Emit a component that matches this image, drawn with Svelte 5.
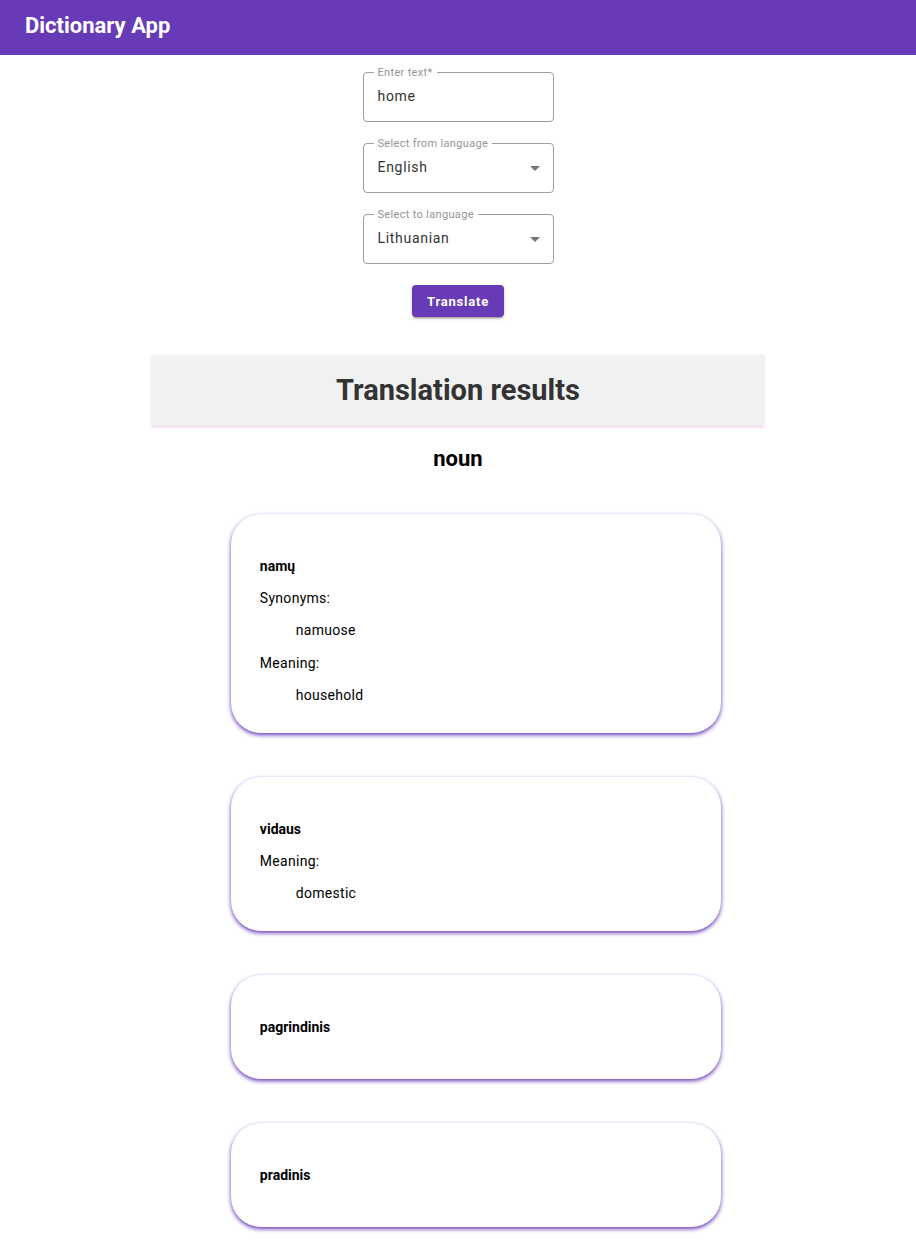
<script>
  const languages = ['English', 'Lithuanian', 'German', 'French', 'Spanish'];

  let text = $state('home');
  let from = $state('English');
  let to = $state('Lithuanian');

  const groups = [
    {
      type: 'noun',
      entries: [
        { word: 'namų', synonyms: ['namuose'], meanings: ['household'] },
        { word: 'vidaus', synonyms: [], meanings: ['domestic'] },
        { word: 'pagrindinis', synonyms: [], meanings: [] },
        { word: 'pradinis', synonyms: [], meanings: [] }
      ]
    }
  ];
</script>

{#snippet arrow()}
  <svg class="arrow" viewBox="0 0 10 5" aria-hidden="true"><path d="M0 0h10L5 5z" /></svg>
{/snippet}

<header class="toolbar">
  <h1>Dictionary App</h1>
</header>

<main>
  <form onsubmit={(e) => e.preventDefault()}>
    <div class="field">
      <label for="text">Enter text*</label>
      <input id="text" type="text" bind:value={text} />
    </div>
    <div class="field">
      <label for="from">Select from language</label>
      <select id="from" bind:value={from}>
        {#each languages as language}<option>{language}</option>{/each}
      </select>
      {@render arrow()}
    </div>
    <div class="field">
      <label for="to">Select to language</label>
      <select id="to" bind:value={to}>
        {#each languages as language}<option>{language}</option>{/each}
      </select>
      {@render arrow()}
    </div>
    <button type="submit">Translate</button>
  </form>

  <section class="results">
    <h2>Translation results</h2>
    {#each groups as group}
      <h3>{group.type}</h3>
      <ul>
        {#each group.entries as entry}
          <li>
            <h4>{entry.word}</h4>
            {#if entry.synonyms.length || entry.meanings.length}
              <dl>
                {#if entry.synonyms.length}
                  <dt>Synonyms:</dt>
                  {#each entry.synonyms as synonym}<dd>{synonym}</dd>{/each}
                {/if}
                {#if entry.meanings.length}
                  <dt>Meaning:</dt>
                  {#each entry.meanings as meaning}<dd>{meaning}</dd>{/each}
                {/if}
              </dl>
            {/if}
          </li>
        {/each}
      </ul>
    {/each}
  </section>
</main>

<style>
  :global(body) {
    margin: 0;
    background: #fff;
    color: #000;
    font-family: Roboto, 'Liberation Sans', sans-serif;
    font-size: 14px;
  }

  .toolbar {
    padding: 13px 25px 16px;
    background: #673ab7;
    color: #fff;
  }

  h1 {
    margin: 0;
    font-size: 22px;
    line-height: 26px;
    font-weight: 700;
  }

  form {
    display: flex;
    flex-direction: column;
    align-items: center;
    gap: 21px;
    padding-top: 17px;
  }

  .field {
    position: relative;
    width: 191px;
  }

  .field label {
    position: absolute;
    top: -6px;
    left: 11px;
    padding: 0 4px;
    background: #fff;
    color: #949494;
    font-size: 11px;
    line-height: 13px;
    letter-spacing: 0.03em;
  }

  input,
  select {
    display: block;
    box-sizing: border-box;
    width: 100%;
    height: 50px;
    padding: 0 14px 2px;
    border: 1px solid #9e9e9e;
    border-radius: 4px;
    background: transparent;
    color: #333;
    font: inherit;
    letter-spacing: 0.05em;
    appearance: none;
  }

  .arrow {
    position: absolute;
    top: 23px;
    right: 14px;
    width: 10px;
    height: 5px;
    fill: #757575;
    pointer-events: none;
  }

  button {
    height: 32px;
    padding: 0 15px;
    border: 0;
    border-radius: 4px;
    background: #673ab7;
    box-shadow:
      0 3px 1px -2px rgba(0, 0, 0, 0.2),
      0 2px 2px rgba(0, 0, 0, 0.14),
      0 1px 5px rgba(0, 0, 0, 0.12);
    color: #fff;
    font: inherit;
    font-size: 13px;
    font-weight: 700;
    letter-spacing: 0.06em;
    cursor: pointer;
  }

  .results {
    width: 66.9%;
    margin: 38px auto 0;
  }

  h2 {
    margin: 0;
    padding: 18px 0;
    border-radius: 2px;
    background: #f1f1f1;
    box-shadow: 0 1px 3px rgba(206, 80, 206, 0.35);
    color: #333;
    font-size: 29px;
    line-height: 35px;
    text-align: center;
  }

  h3 {
    margin: 20px 0 42px;
    font-size: 22px;
    line-height: 26px;
    text-align: center;
  }

  ul {
    display: flex;
    flex-direction: column;
    align-items: center;
    gap: 44px;
    margin: 0;
    padding: 0 0 30px 36px;
    list-style: none;
  }

  li {
    display: flow-root;
    box-sizing: border-box;
    width: 85%;
    padding: 29px;
    border-radius: 30px;
    box-shadow: 0 2px 4px #673ab7;
    background: #fff;
  }

  h4 {
    margin: 15px 0 14px;
    font-size: 14px;
    line-height: 17px;
  }

  dl {
    display: flex;
    flex-direction: column;
    gap: 15px;
    margin: 0;
    letter-spacing: 0.02em;
  }

  dt {
    line-height: 18px;
  }

  dd {
    margin: 0 0 0 36px;
    line-height: 17px;
  }
</style>
